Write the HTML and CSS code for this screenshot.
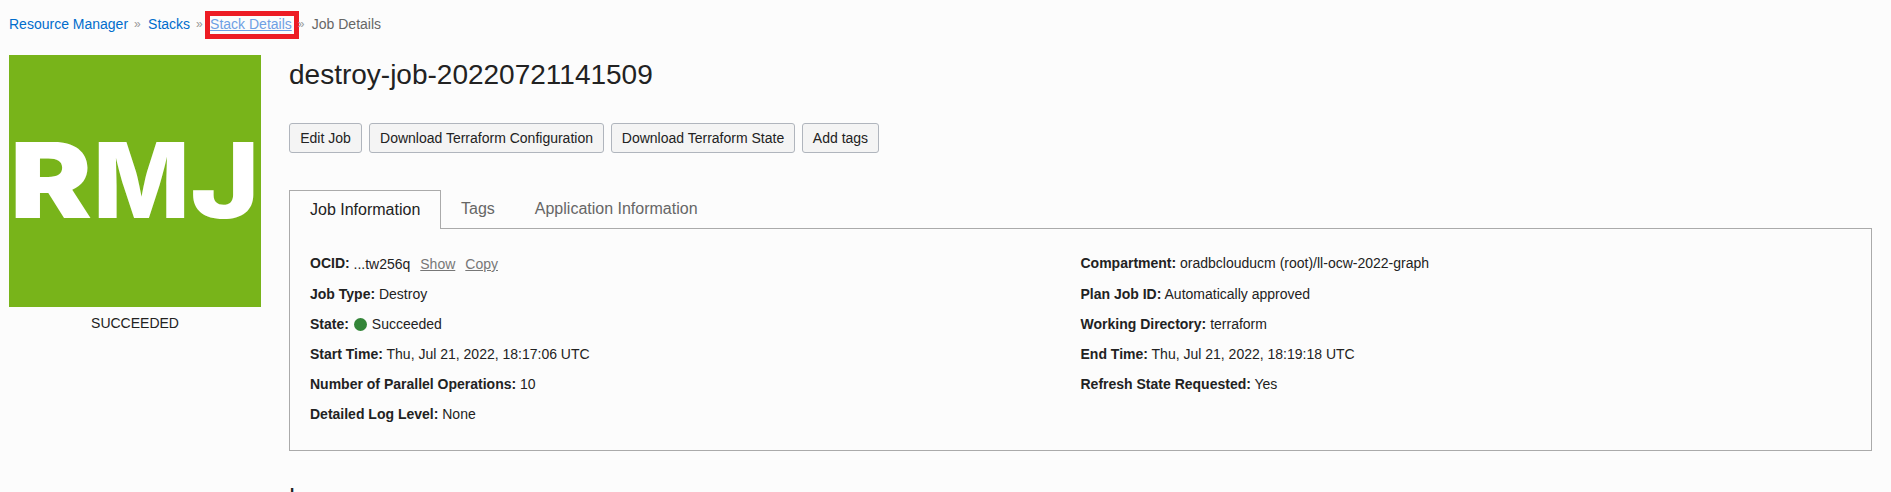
FILE: index.html
```html
<!DOCTYPE html>
<html lang="en">
<head>
<meta charset="utf-8">
<title>Job Details</title>
<link rel="stylesheet" href="styles.css">
</head>
<body>
<nav class="breadcrumb">
  <a class="crumb manager">Resource Manager</a><span class="sep">»</span>
  <a class="crumb stacks">Stacks</a><span class="sep">»</span>
  <a class="crumb highlighted">Stack Details</a><span class="sep tight">»</span>
  <span class="current">Job Details</span>
</nav>
<div class="page">
  <aside class="side">
    <svg class="badge" viewBox="0 0 252 252" role="img" aria-label="RMJ">
      <text class="badge-text" x="1" y="163" textLength="82" lengthAdjust="spacingAndGlyphs">R</text>
      <text class="badge-text letter-m" x="84" y="163" textLength="97" lengthAdjust="spacingAndGlyphs">M</text>
      <text class="badge-text letter-j" x="181" y="163" textLength="70" lengthAdjust="spacingAndGlyphs">J</text>
    </svg>
    <div class="status">SUCCEEDED</div>
  </aside>
  <main class="main">
    <h1 class="title">destroy-job-20220721141509</h1>
    <div class="actions">
      <button class="btn edit">Edit Job</button>
      <button class="btn config">Download Terraform Configuration</button>
      <button class="btn state">Download Terraform State</button>
      <button class="btn tags">Add tags</button>
    </div>
    <div class="tabs">
      <div class="tab active">Job Information</div>
      <div class="tab">Tags</div>
      <div class="tab">Application Information</div>
    </div>
    <section class="panel">
      <div class="column">
        <div class="row first"><b>OCID:</b> <span class="ocid">...tw256q <a class="action">Show</a><a class="action">Copy</a></span></div>
        <div class="row"><b>Job Type:</b> Destroy</div>
        <div class="row"><b>State:</b> <span class="dot"></span>Succeeded</div>
        <div class="row"><b>Start Time:</b> Thu, Jul 21, 2022, 18:17:06 UTC</div>
        <div class="row"><b>Number of Parallel Operations:</b> 10</div>
        <div class="row"><b>Detailed Log Level:</b> None</div>
      </div>
      <div class="column">
        <div class="row first"><b>Compartment:</b> oradbclouducm (root)/ll-ocw-2022-graph</div>
        <div class="row"><b>Plan Job ID:</b> Automatically approved</div>
        <div class="row"><b>Working Directory:</b> terraform</div>
        <div class="row"><b>End Time:</b> Thu, Jul 21, 2022, 18:19:18 UTC</div>
        <div class="row"><b>Refresh State Requested:</b> Yes</div>
      </div>
    </section>
    <h2 class="section-title">Logs</h2>
  </main>
</div>
</body>
</html>
```
FILE: styles.css
```css
* { box-sizing: border-box; }
html, body { height: 100%; overflow: hidden; }
body {
  margin: 0;
  background: #fcfcfc;
  color: #222;
  font: 14px/20px "Liberation Sans", Arial, sans-serif;
}
.breadcrumb {
  display: flex;
  align-items: center;
  height: 55px;
  padding: 0 0 7px 9px;
}
.crumb { color: #006dcc; }
.sep { width: 20px; padding-left: 6px; color: #999; font-size: 12px; }
.highlighted {
  color: #6ea0e4;
  text-decoration: underline;
  outline: 5px solid #ed1c24;
  height: 18px;
  line-height: 16px;
  margin-top: 2px;
  padding-right: 2px;
}
.sep.tight { width: 18px; padding-left: 4px; }
.current { color: #666; }
.page { display: flex; gap: 28px; padding: 0 19px 0 9px; }
.side { width: 252px; flex: none; }
.badge { display: block; width: 252px; height: 252px; background: #78b41a; }
.badge-text { font: 900 104.5px Inter, sans-serif; fill: #fff; }
.letter-m, .letter-j { font-weight: 800; }
.status { text-align: center; padding-top: 6px; }
.main { flex: 1; min-width: 0; }
.title { margin: 0; height: 68px; padding-top: 1px; font-size: 28px; font-weight: 400; line-height: 37px; }
.actions { display: flex; gap: 7px; }
.btn {
  height: 30px;
  padding: 0;
  border: 1px solid #b0b5bd;
  border-radius: 3px;
  background: #f4f4f4;
  color: #222;
  font: inherit;
  white-space: nowrap;
}
.edit { width: 73px; }
.config { width: 235px; }
.state { width: 184px; }
.tags { width: 77px; }
.tabs { display: flex; height: 39px; margin-top: 37px; font-size: 16px; line-height: 37px; white-space: nowrap; }
.tab { padding: 0 20px; color: #666; }
.tab.active {
  width: 152px;
  height: 39px;
  border: 1px solid #aaa;
  border-bottom: 0;
  background: #fcfcfc;
  color: #222;
  line-height: 38px;
  z-index: 1;
}
.panel {
  display: grid;
  grid-template-columns: 770.5px 1fr;
  height: 223px;
  margin-top: -1px;
  padding: 24px 20px 0;
  border: 1px solid #aaa;
}
.row { height: 30px; line-height: 20px; white-space: nowrap; }
.row.first { height: 31px; }
.ocid { display: inline-block; height: 20px; vertical-align: top; transform: translateY(1px); }
.action { margin-left: 6px; color: #777; text-decoration: underline; }
.action + .action { margin-left: 10px; }
.dot { display: inline-block; width: 13px; height: 13px; margin: 0 5px 0 1px; border-radius: 50%; background: #338538; vertical-align: -2px; }
.section-title { margin: 30px 0 0; font-size: 24px; font-weight: 400; line-height: 32px; }
```
